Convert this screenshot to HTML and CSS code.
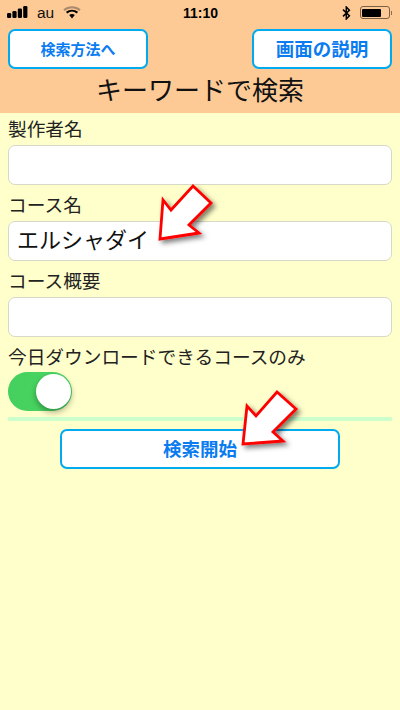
FILE: index.html
```html
<!DOCTYPE html>
<html lang="ja">
<head>
<meta charset="utf-8">
<title>キーワードで検索</title>
<link rel="stylesheet" href="styles.css">
</head>
<body>
<div class="screen">
  <header class="head">
    <div class="status">
      <div class="status-left">
        <svg class="signal" width="21" height="12" viewBox="0 0 21 12"><rect x="0" y="7" width="4.2" height="5" rx="1.2"/><rect x="5.4" y="5" width="4.2" height="7" rx="1.2"/><rect x="10.8" y="2.5" width="4.2" height="9.5" rx="1.2"/><rect x="16.2" y="0" width="4.2" height="12" rx="1.2"/></svg>
        <span class="carrier">au</span>
        <svg class="wifi" width="18" height="13" viewBox="0 0 18 13"><path d="M1 4.2C5.5 0.2 12.5 0.2 17 4.2" fill="none" stroke="#a98a6c" stroke-width="2"/><path d="M3.6 6.6C6.8 4 11.2 4 14.4 6.6" fill="none" stroke="#000" stroke-width="2"/><path d="M6.2 9C7.8 7.8 10.2 7.8 11.8 9L9 12.4Z" fill="#000"/></svg>
      </div>
      <div class="clock">11:10</div>
      <div class="status-right">
        <svg class="bt" width="9" height="14" viewBox="0 0 9 14"><path d="M1 3.6L7.4 9.8L4.3 13V1L7.4 4.2L1 10.4" fill="none" stroke="#000" stroke-width="1.5"/></svg>
        <div class="battery"><div class="battery-fill"></div></div>
        <div class="battery-cap"></div>
      </div>
    </div>
    <div class="head-buttons">
      <button class="btn btn-small">検索方法へ</button>
      <button class="btn btn-large">画面の説明</button>
    </div>
    <h1 class="title">キーワードで検索</h1>
  </header>
  <main class="form">
    <label class="label">製作者名</label>
    <div class="input"></div>
    <label class="label">コース名</label>
    <div class="input input-filled">エルシャダイ</div>
    <label class="label">コース概要</label>
    <div class="input"></div>
    <label class="label">今日ダウンロードできるコースのみ</label>
    <div class="switch"><div class="knob"></div></div>
    <div class="divider"></div>
    <button class="btn btn-start">検索開始</button>
  </main>
  <svg class="arrows" width="400" height="710" viewBox="0 0 400 710">
    <defs>
      <filter id="sh" x="-30%" y="-30%" width="170%" height="170%"><feDropShadow dx="3" dy="3" stdDeviation="2.5" flood-color="#000" flood-opacity="0.5"/></filter>
    </defs>
    <polygon filter="url(#sh)" points="160,239 163,200 171,210 193,186 211,203 189,225 199,233" fill="#fff" stroke="#f00" stroke-width="2.8" stroke-linejoin="miter"/>
    <polygon filter="url(#sh)" points="243,444 247,406 256,416 277,392 296,409 273,432 283,441" fill="#fff" stroke="#f00" stroke-width="2.8" stroke-linejoin="miter"/>
  </svg>
</div>
</body>
</html>
```
FILE: styles.css
```css
* { box-sizing: border-box; }
html, body { margin: 0; padding: 0; }
body { font-family: "Noto Sans CJK JP", "Noto Sans", sans-serif; color: #111; }
.screen { position: relative; width: 400px; height: 710px; background: #ffffcb; overflow: hidden; }
.head { background: #fdca96; height: 113px; display: flex; flex-direction: column; }
.status { height: 29px; display: grid; grid-template-columns: 1fr auto 1fr; align-items: center; padding: 0 8px 3px 7px; }
.status-left { display: flex; align-items: center; gap: 9px; }
.signal { fill: #000; margin-top: -2px; }
.carrier { font-family: "Liberation Sans", sans-serif; font-size: 15.5px; color: #111; line-height: 16px; }
.wifi { margin-top: -1px; }
.clock { font-family: "Liberation Sans", sans-serif; font-size: 14px; font-weight: 700; color: #000; padding-left: 2px; }
.status-right { display: flex; align-items: center; justify-content: flex-end; margin-top: -1px; }
.bt { margin-right: 9px; }
.battery { width: 30px; height: 13px; border: 1px solid #7a5f45; border-radius: 3px; padding: 1.5px; }
.battery-fill { width: 19px; height: 100%; background: #000; border-radius: 1px; }
.battery-cap { width: 1.5px; height: 4px; background: #8a6f55; margin-left: 1px; }
.head-buttons { display: flex; justify-content: space-between; padding: 0 8px; }
.btn { background: #fff; border: 2.5px solid #00aaf0; border-radius: 7px; color: #0a7cf0; font-family: inherit; font-weight: 700; padding: 0 0 2px; display: block; }
.btn-small { width: 140px; height: 40px; font-size: 15px; }
.btn-large { width: 140px; height: 40px; font-size: 18.5px; }
.title { margin: 0; font-size: 26px; font-weight: 400; text-align: center; line-height: 40px; height: 44px; color: #111; }
.form { padding: 0 8px; display: flex; flex-direction: column; }
.label { font-size: 18.7px; line-height: 30px; height: 32px; color: #222; }
.input { height: 40px; background: #fff; border: 1px solid #d8d8c8; border-radius: 7px; line-height: 33px; padding-left: 8px; color: #111; margin-bottom: 4px; }
.input-filled { font-size: 22px; }
.switch { width: 64px; height: 39px; border-radius: 20px; background: linear-gradient(90deg, #45cf5e, #4cd964); position: relative; margin-top: -1px; }
.knob { position: absolute; right: 1px; top: 2px; width: 35px; height: 35px; border-radius: 50%; background: #fff; box-shadow: 0 3px 6px rgba(0,0,0,0.35); }
.divider { height: 4px; background: #ccffcc; margin-top: 6px; }
.btn-start { width: 280px; height: 40px; font-size: 18.5px; align-self: center; margin-top: 8px; }
.arrows { position: absolute; left: 0; top: 0; pointer-events: none; }
```
